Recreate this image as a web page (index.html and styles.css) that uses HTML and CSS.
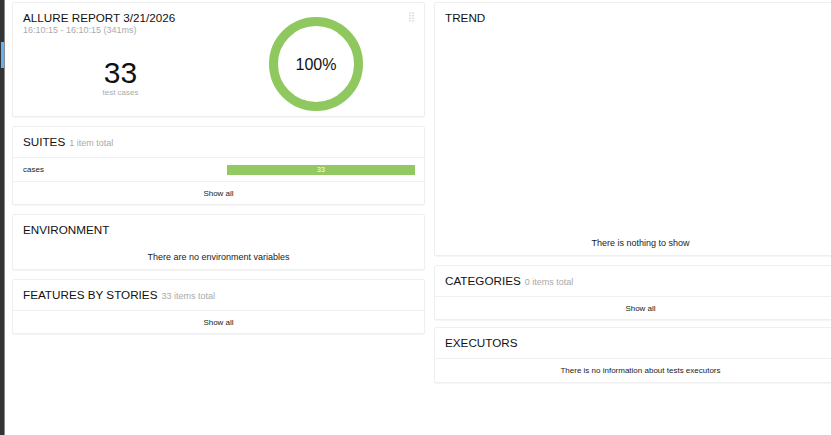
FILE: index.html
```html
<!DOCTYPE html>
<html lang="en">
<head>
<meta charset="utf-8">
<title>Allure Report</title>
<link rel="stylesheet" href="styles.css">
</head>
<body>
<div class="app">
  <nav class="side"><span class="side-active"></span></nav>
  <main class="content">
    <div class="col">
      <section class="card summary">
        <span class="drag">
          <svg width="5" height="10" viewBox="0 0 5 10"><g fill="#c8c8c8"><circle cx="1" cy="1" r="0.8"/><circle cx="4" cy="1" r="0.8"/><circle cx="1" cy="3.7" r="0.8"/><circle cx="4" cy="3.7" r="0.8"/><circle cx="1" cy="6.3" r="0.8"/><circle cx="4" cy="6.3" r="0.8"/><circle cx="1" cy="9" r="0.8"/><circle cx="4" cy="9" r="0.8"/></g></svg>
        </span>
        <div class="summary-left">
          <h2 class="summary-title">ALLURE REPORT 3/21/2026</h2>
          <div class="summary-sub">16:10:15 - 16:10:15 (341ms)</div>
          <div class="summary-count">33</div>
          <div class="summary-label">test cases</div>
        </div>
        <div class="summary-right">
          <svg class="donut" width="94" height="94" viewBox="0 0 94 94">
            <circle cx="47" cy="47" r="42.5" fill="none" stroke="#8fc85f" stroke-width="9"/>
            <text x="47" y="53" text-anchor="middle" class="donut-text">100%</text>
          </svg>
        </div>
      </section>

      <section class="card">
        <div class="card-head"><h2 class="card-title">SUITES</h2><span class="card-count">1 item total</span></div>
        <div class="row suite-row">
          <span class="suite-name">cases</span>
          <span class="bar">33</span>
        </div>
        <div class="row link-row">Show all</div>
      </section>

      <section class="card">
        <div class="card-head"><h2 class="card-title">ENVIRONMENT</h2></div>
        <div class="row msg-row plain">There are no environment variables</div>
      </section>

      <section class="card">
        <div class="card-head"><h2 class="card-title">FEATURES BY STORIES</h2><span class="card-count">33 items total</span></div>
        <div class="row link-row">Show all</div>
      </section>
    </div>

    <div class="col">
      <section class="card trend">
        <div class="card-head"><h2 class="card-title">TREND</h2></div>
        <div class="trend-body">
          <div class="msg-row plain">There is nothing to show</div>
        </div>
      </section>

      <section class="card">
        <div class="card-head"><h2 class="card-title">CATEGORIES</h2><span class="card-count">0 items total</span></div>
        <div class="row link-row">Show all</div>
      </section>

      <section class="card executors">
        <div class="card-head"><h2 class="card-title">EXECUTORS</h2></div>
        <div class="row small-msg">There is no information about tests executors</div>
      </section>
    </div>
  </main>
</div>
</body>
</html>
```

FILE: styles.css
```css
html, body {
  margin: 0;
  padding: 0;
  background: #fff;
  overflow: hidden;
  height: 100%;
}

body {
  font-family: "Liberation Sans", Arial, sans-serif;
  color: #222;
}

.app {
  display: flex;
  height: 100%;
}

.side {
  flex: 0 0 4px;
  background: #333;
  border-right: 1px solid #8a8a8a;
  display: flex;
  flex-direction: column;
}

.side-active {
  display: block;
  margin-top: 42px;
  margin-left: 1px;
  height: 26px;
  background: #62b3f4;
}

.content {
  flex: 0 0 auto;
  display: flex;
  gap: 9px;
  padding: 2px 0 0 7px;
}

.col {
  width: 413px;
  display: flex;
  flex-direction: column;
  gap: 9px;
}

.card {
  position: relative;
  box-sizing: border-box;
  background: #fff;
  border: 1px solid #efefef;
  box-shadow: 0 1px 1px rgba(0, 0, 0, 0.04);
  border-radius: 2px;
}

.executors {
  margin-top: -2px;
}

/* summary */
.summary {
  height: 115px;
  display: grid;
  grid-template-columns: 1fr 1fr;
  padding: 0 11px 0 10px;
}

.drag {
  position: absolute;
  top: 9px;
  right: 10px;
  line-height: 0;
}

.summary-title {
  margin: 7px 0 0;
  font-size: 11.7px;
  line-height: 15px;
  font-weight: normal;
  color: #111;
  white-space: nowrap;
}

.summary-sub {
  font-size: 9px;
  line-height: 11px;
  color: #aaa;
}

.summary-count {
  margin-top: 23px;
  text-align: center;
  font-size: 30px;
  line-height: 28px;
  color: #111;
}

.summary-label {
  margin-top: 1px;
  text-align: center;
  font-size: 8px;
  line-height: 9px;
  color: #aaa;
}

.summary-right {
  display: flex;
  justify-content: center;
  padding-top: 14px;
}

.donut-text {
  font-family: "Liberation Sans", Arial, sans-serif;
  font-size: 16px;
  fill: #111;
}

/* generic card parts */
.card-head {
  padding: 7px 11px 8px 10px;
  height: 15px;
  display: flex;
  align-items: baseline;
  gap: 4px;
  white-space: nowrap;
}

.card-title {
  margin: 0;
  font-size: 11.7px;
  line-height: 15px;
  font-weight: normal;
  color: #111;
}

.card-count {
  font-size: 9px;
  color: #aaa;
}

.row {
  border-top: 1px solid #f1f1f1;
  display: flex;
  align-items: center;
}

.suite-row {
  height: 23px;
  padding: 0 9px 0 10px;
  justify-content: space-between;
  font-size: 8px;
  color: #222;
}

.bar {
  width: 188px;
  height: 10px;
  background: #92c962;
  color: #fff;
  font-size: 7px;
  line-height: 10px;
  text-align: center;
}

.link-row {
  height: 22px;
  justify-content: center;
  font-size: 8px;
  color: #222;
}

.msg-row {
  height: 24px;
  display: flex;
  align-items: center;
  justify-content: center;
  font-size: 9px;
  color: #222;
}

.msg-row.plain {
  border-top: none;
}

.small-msg {
  height: 23px;
  justify-content: center;
  font-size: 8px;
  color: #222;
}

.trend {
  height: 254px;
  display: flex;
  flex-direction: column;
}

.trend-body {
  flex: 1;
  display: flex;
  flex-direction: column;
  justify-content: flex-end;
}
```
